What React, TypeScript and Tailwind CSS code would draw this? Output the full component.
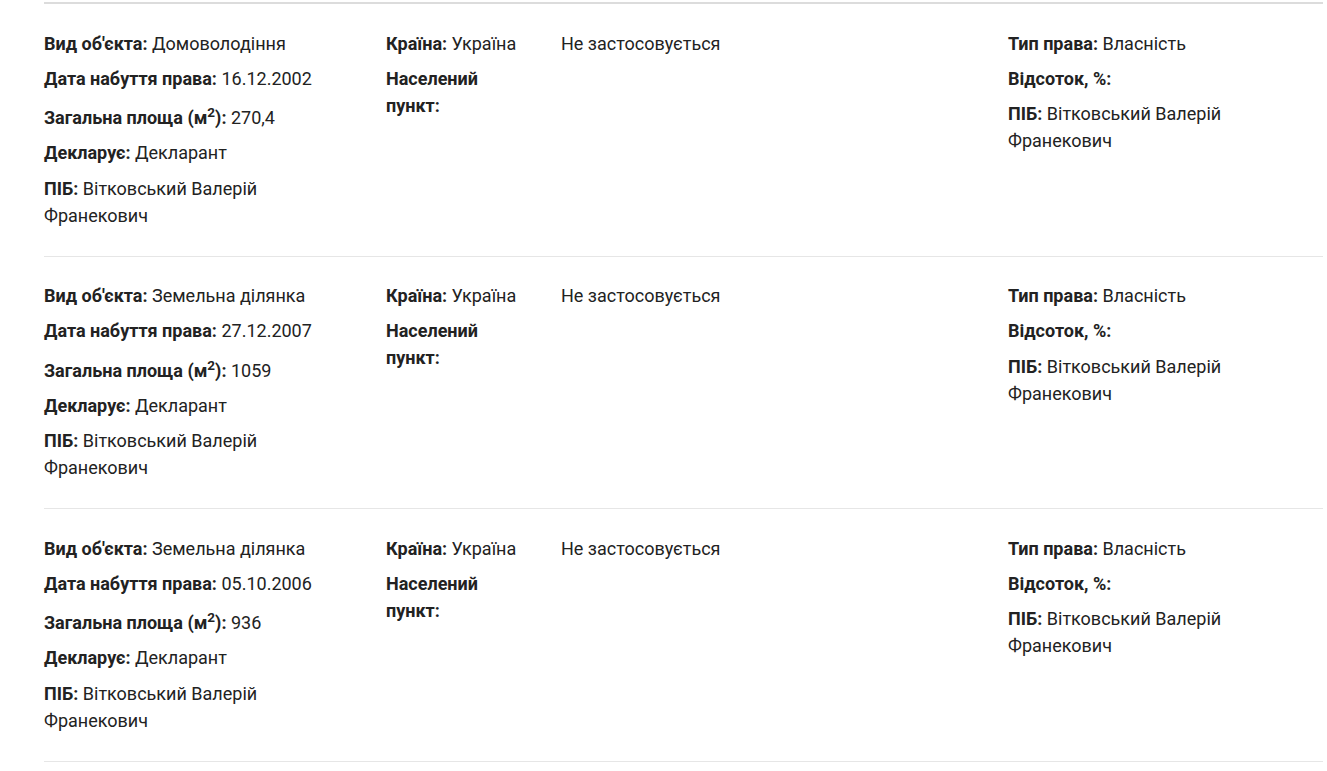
import React from "react";

type Row = {
  kind: string;
  date: string;
  area: string;
};

const rows: Row[] = [
  { kind: "Домоволодіння", date: "16.12.2002", area: "270,4" },
  { kind: "Земельна ділянка", date: "27.12.2007", area: "1059" },
  { kind: "Земельна ділянка", date: "05.10.2006", area: "936" },
];

function Item({ label, children }: { label: React.ReactNode; children?: React.ReactNode }) {
  return (
    <p className="mb-[8.25px] last:mb-0">
      <span className="font-bold">{label}</span>
      {children ? <> {children}</> : null}
    </p>
  );
}

export default function App() {
  return (
    <div
      className="min-h-[771px] bg-white pl-[44px] pr-[4px] pt-[2px] text-[18px] leading-[27px] text-[#222222]"
      style={{ fontFamily: "Roboto, 'Noto Sans', sans-serif" }}
    >
      <div className="border-t-2 border-[#dcdcdc]">
        {rows.map((r, i) => (
          <div
            key={i}
            className="grid grid-cols-[342px_175px_447px_1fr] border-b border-[#e6e6e6] pt-[25.5px] pb-[27px]"
          >
            <div>
              <Item label="Вид об'єкта:">{r.kind}</Item>
              <Item label="Дата набуття права:">{r.date}</Item>
              <p className="mb-[8.25px] pt-[4px]">
                <span className="font-bold">
                  Загальна площа (м<sup>2</sup>):
                </span>{" "}
                {r.area}
              </p>
              <Item label="Декларує:">Декларант</Item>
              <p className="pr-[60px]">
                <span className="font-bold">ПІБ:</span> Вітковський Валерій Франекович
              </p>
            </div>
            <div>
              <Item label="Країна:">Україна</Item>
              <p className="pr-[40px]">
                <span className="font-bold">Населений пункт:</span>
              </p>
            </div>
            <div>
              <p>Не застосовується</p>
            </div>
            <div>
              <Item label="Тип права:">Власність</Item>
              <Item label="Відсоток, %:" />
              <p className="pr-[60px]">
                <span className="font-bold">ПІБ:</span> Вітковський Валерій Франекович
              </p>
            </div>
          </div>
        ))}
      </div>
    </div>
  );
}
